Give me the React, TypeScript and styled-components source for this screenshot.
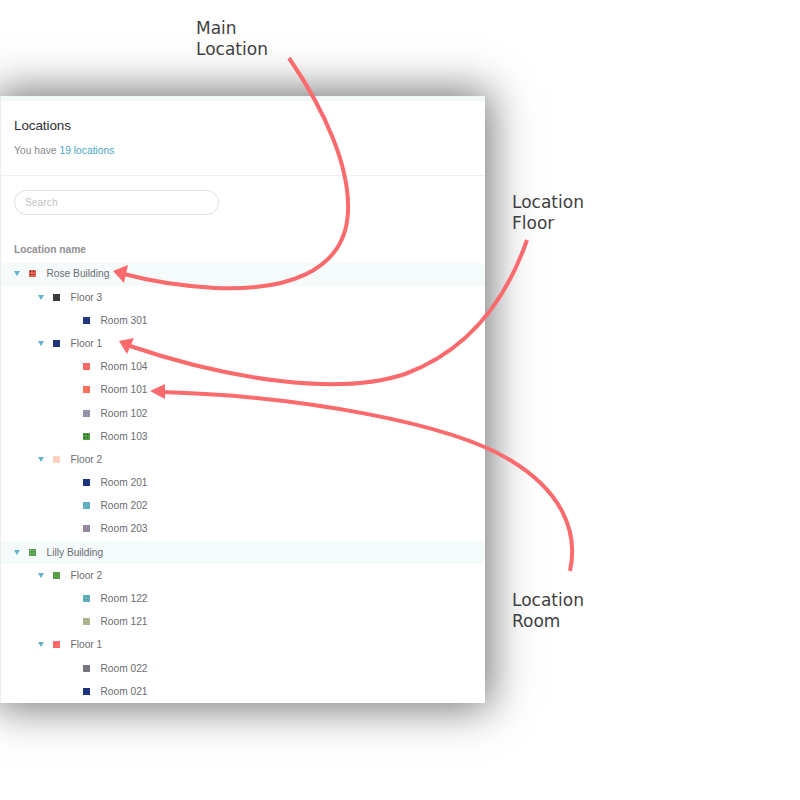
import React from 'react';
import styled, { createGlobalStyle } from 'styled-components';

type Level = 0 | 1 | 2;

interface TreeItem {
  name: string;
  level: Level;
  color: string;
  speck?: string;
}

const ITEMS: TreeItem[] = [
  { name: 'Rose Building', level: 0, color: '#e8604f', speck: '#2a2a2a' },
  { name: 'Floor 3', level: 1, color: '#403b3d' },
  { name: 'Room 301', level: 2, color: '#1f3480', speck: '#3f5296' },
  { name: 'Floor 1', level: 1, color: '#1f3480' },
  { name: 'Room 104', level: 2, color: '#fb6a62' },
  { name: 'Room 101', level: 2, color: '#fc7058' },
  { name: 'Room 102', level: 2, color: '#8d90a6', speck: '#a7a9b8' },
  { name: 'Room 103', level: 2, color: '#4f9a3f', speck: '#1f4a22' },
  { name: 'Floor 2', level: 1, color: '#fdd3c4', speck: '#f8b8a6' },
  { name: 'Room 201', level: 2, color: '#1f3480' },
  { name: 'Room 202', level: 2, color: '#63b0c6' },
  { name: 'Room 203', level: 2, color: '#8d8aa2', speck: '#c4767c' },
  { name: 'Lilly Building', level: 0, color: '#5aa04a', speck: '#a5c99c' },
  { name: 'Floor 2', level: 1, color: '#5a9e45' },
  { name: 'Room 122', level: 2, color: '#5fb0c4', speck: '#4f9a5a' },
  { name: 'Room 121', level: 2, color: '#b3b594', speck: '#6aa860' },
  { name: 'Floor 1', level: 1, color: '#fb6a68' },
  { name: 'Room 022', level: 2, color: '#77737f' },
  { name: 'Room 021', level: 2, color: '#1f3480' },
];

const App = () => {
  return (
    <>
      <GlobalStyle />
      <Page>
        <Panel>
          <TopStrip />
          <Header>
            <Title>Locations</Title>
            <Subtitle>
              You have <CountLink>19 locations</CountLink>
            </Subtitle>
          </Header>
          <SearchArea>
            <SearchInput placeholder="Search" />
          </SearchArea>
          <ColumnTitle>Location name</ColumnTitle>
          <Tree>
            {ITEMS.map((item, index) => (
              <Row key={index} $level={item.level}>
                {item.level < 2 && <Caret />}
                <Swatch $color={item.color} $speck={item.speck} />
                <RowName>{item.name}</RowName>
              </Row>
            ))}
          </Tree>
        </Panel>

        <Note $left={196} $top={18}>Main<br />Location</Note>
        <Note $left={512} $top={192}>Location<br />Floor</Note>
        <Note $left={512} $top={590}>Location<br />Room</Note>

        <Arrows width="800" height="800" viewBox="0 0 800 800">
          <path d="M289 58 C326 112 350 168 348 212 C345 274 282 291 215 288 C180 286 150 281 124 274" />
          <polygon points="113,271 128,265 124,283" />
          <path d="M527 240 C506 300 470 350 405 374 C340 396 230 380 130 346" />
          <polygon points="119,341 134,338 127,354" />
          <path d="M570 571 C579 530 560 490 510 460 C450 423 300 396 162 392" />
          <polygon points="150,391 165,384 165,399" />
        </Arrows>
      </Page>
    </>
  );
};

export default App;

// ========== Styled Components ==========

const GlobalStyle = createGlobalStyle`
  body {
    margin: 0;
    background: #fff;
    font-family: "Liberation Sans", Arial, sans-serif;
  }
`;

const Page = styled.div`
  position: relative;
  width: 800px;
  height: 800px;
  padding-top: 96px;
  box-sizing: border-box;
  overflow: hidden;
  background: #fff;
`;

const Panel = styled.div`
  width: 485px;
  height: 607px;
  box-sizing: border-box;
  overflow: hidden;
  background: #fff;
  border-left: 1px solid #ececec;
  box-shadow: 0 0 40px 5px rgba(0, 0, 0, 0.55);
`;

const TopStrip = styled.div`
  height: 5px;
  background: #f2f7f8;
`;

const Header = styled.div`
  height: 75px;
  box-sizing: border-box;
  padding: 18px 0 0 13px;
  border-bottom: 1px solid #f0f0f0;
`;

const Title = styled.div`
  font-size: 13.5px;
  line-height: 14px;
  letter-spacing: -0.1px;
  color: #30303a;
`;

const Subtitle = styled.div`
  margin-top: 11px;
  font-size: 10.3px;
  line-height: 14px;
  color: #8a8a8a;
`;

const CountLink = styled.span`
  color: #4aa5c4;
`;

const SearchArea = styled.div`
  padding: 14px 0 0 13px;
`;

const SearchInput = styled.input`
  display: block;
  width: 205px;
  height: 25px;
  box-sizing: border-box;
  padding: 0 10px;
  border: 1px solid #e0e0e0;
  border-radius: 13px;
  outline: none;
  font-family: inherit;
  font-size: 10.3px;
  color: #666;

  &::placeholder {
    color: #c4c4c8;
  }
`;

const ColumnTitle = styled.div`
  margin: 28px 0 0 13px;
  font-size: 10.2px;
  line-height: 14px;
  font-weight: bold;
  color: #8f8f94;
`;

const Tree = styled.div`
  margin-top: 6px;
`;

const rowPadding = { 0: 13, 1: 37, 2: 82 };

const Row = styled.div<{ $level: Level }>`
  display: flex;
  align-items: center;
  height: 23.2px;
  box-sizing: border-box;
  padding-bottom: 1.4px;
  padding-left: ${(p) => rowPadding[p.$level]}px;
  background: ${(p) => (p.$level === 0 ? '#f5fafb' : 'transparent')};
`;

const Caret = styled.span`
  width: 0;
  height: 0;
  margin-right: 9px;
  border-left: 3px solid transparent;
  border-right: 3px solid transparent;
  border-top: 5px solid #62b3cb;
`;

const Swatch = styled.span<{ $color: string; $speck?: string }>`
  width: 7px;
  height: 7px;
  margin-right: 10.5px;
  background-color: ${(p) => p.$color};
  background-image: ${(p) =>
    p.$speck
      ? `radial-gradient(circle, ${p.$speck} 0.8px, transparent 1px)`
      : 'none'};
  background-size: 3px 3px;
`;

const RowName = styled.span`
  font-size: 10.2px;
  color: #6c6c70;
`;

const Note = styled.div<{ $left: number; $top: number }>`
  position: absolute;
  left: ${(p) => p.$left}px;
  top: ${(p) => p.$top}px;
  font-family: "DejaVu Sans", sans-serif;
  font-size: 17px;
  line-height: 21px;
  color: #3f3f42;
`;

const Arrows = styled.svg`
  position: absolute;
  left: 0;
  top: 0;
  pointer-events: none;

  path {
    fill: none;
    stroke: #fb6a6c;
    stroke-width: 4;
  }

  polygon {
    fill: #fb6a6c;
  }
`;
